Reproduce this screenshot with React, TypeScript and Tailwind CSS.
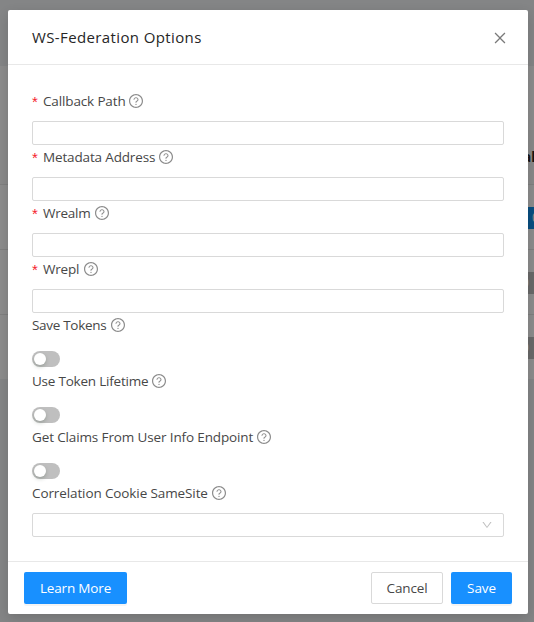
import React from "react";
import { AiOutlineClose, AiOutlineDown, AiOutlineQuestionCircle } from "react-icons/ai";

type Field = {
  label: string;
  kind: "input" | "switch" | "select";
  required?: boolean;
  width: string;
  spacing: string;
};

const fields: Field[] = [
  { label: "Callback Path", kind: "input", required: true, width: "w-[85px]", spacing: "tracking-[-0.14px]" },
  { label: "Metadata Address", kind: "input", required: true, width: "w-[115px]", spacing: "tracking-[-0.15px]" },
  { label: "Wrealm", kind: "input", required: true, width: "w-[51px]", spacing: "tracking-[-0.25px]" },
  { label: "Wrepl", kind: "input", required: true, width: "w-[40px]", spacing: "tracking-[-0.2px]" },
  { label: "Save Tokens", kind: "switch", width: "w-[78px]", spacing: "tracking-[-0.3px]" },
  { label: "Use Token Lifetime", kind: "switch", width: "w-[119px]", spacing: "tracking-[-0.22px]" },
  { label: "Get Claims From User Info Endpoint", kind: "switch", width: "w-[224px]", spacing: "tracking-[-0.13px]" },
  { label: "Correlation Cookie SameSite", kind: "select", width: "w-[179px]", spacing: "tracking-[-0.11px]" },
];

function Control({ kind, label }: { kind: Field["kind"]; label: string }) {
  if (kind === "switch") {
    return (
      <div className="flex h-6 items-center pt-1">
        <button role="switch" aria-checked={false} aria-label={label} className="flex h-4 w-7 items-center rounded-full bg-[#bfbfbf] px-[2px]">
          <span className="size-3 rounded-full bg-white shadow-[0_2px_4px_rgba(0,35,11,0.2)]" />
        </button>
      </div>
    );
  }
  if (kind === "select") {
    return (
      <div className="flex h-6 items-center justify-end rounded-[2px] border border-[#d9d9d9] bg-white pr-[10px]">
        <AiOutlineDown className="size-3 text-[#bfbfbf]" />
      </div>
    );
  }
  return <input aria-label={label} className="block h-6 w-full rounded-[2px] border border-[#d9d9d9] bg-white px-2 outline-none" />;
}

function Backdrop() {
  return (
    <div className="h-[622px] w-full bg-[#f0f2f5]">
      <div className="h-[66px]" />
      <div className="h-16 bg-white" />
      <div className="flex h-[55px] items-center border-b border-[#e8e8e8] bg-[#fafafa] pl-[523px] text-[13.5px] font-bold text-[#262626]">al</div>
      <div className="flex h-[65px] items-center border-b border-[#e8e8e8] bg-white pt-[2px] pl-[520px]">
        <div className="flex h-[22px] w-10 items-center bg-[#108ee9] pl-[12px] text-[12px] text-white">0</div>
      </div>
      <div className="flex h-[65px] items-center border-b border-[#e8e8e8] bg-white pt-[2px] pl-[494px]">
        <div className="flex h-[22px] w-10 items-center justify-end bg-[#bfbfbf] pr-[5px] text-[12px] text-white">0</div>
      </div>
      <div className="flex h-16 items-center bg-white pt-[2px] pl-[494px]">
        <div className="flex h-[22px] w-10 items-center justify-end bg-[#bfbfbf] pr-[5px] text-[12px] text-white">0</div>
      </div>
    </div>
  );
}

export default function App() {
  return (
    <div className="relative h-[622px] w-[534px] overflow-hidden font-['Open_Sans','Noto_Sans',sans-serif] text-[13.5px] text-[#474747]">
      <Backdrop />
      <div className="absolute inset-0 bg-black/45 px-2 pt-[10px]">
        <section role="dialog" className="flex h-[604px] w-[520px] flex-col rounded-[2px] bg-white shadow-[0_4px_12px_rgba(0,0,0,0.15)]">
          <header className="flex h-[55px] items-center justify-between border-b border-[#e8e8e8] pr-5 pl-6">
            <h1 className="whitespace-nowrap text-[15px] font-medium tracking-[0.38px] text-[#262626]">WS-Federation Options</h1>
            <button aria-label="Close" className="pt-[2px] text-[#7a7a7a]">
              <AiOutlineClose className="size-4" />
            </button>
          </header>
          <div className="flex-1 px-6 pt-6">
            {fields.map((f) => (
              <div key={f.label} className="h-14">
                <div className="mb-2 flex h-6 items-center">
                  {f.required && <span className="w-[11px] pt-[1px] font-['Liberation_Sans',sans-serif] text-[15px] leading-none text-[#f5222d]">*</span>}
                  <span className={`${f.width} ${f.spacing} whitespace-nowrap`}>{f.label}</span>
                  <AiOutlineQuestionCircle className="size-4 text-[#8c8c8c]" />
                </div>
                <Control kind={f.kind} label={f.label} />
              </div>
            ))}
          </div>
          <footer className="flex h-[53px] items-center justify-between border-t border-[#e8e8e8] px-4">
            <button className="h-8 w-[103px] rounded-[2px] bg-[#1890ff] tracking-[-0.17px] text-white shadow-[0_2px_0_rgba(0,0,0,0.045)]">Learn More</button>
            <div className="flex gap-2">
              <button className="h-8 w-[72px] rounded-[2px] border border-[#d9d9d9] bg-white tracking-[-0.15px]">Cancel</button>
              <button className="h-8 w-[61px] rounded-[2px] bg-[#1890ff] tracking-[-0.1px] text-white shadow-[0_2px_0_rgba(0,0,0,0.045)]">Save</button>
            </div>
          </footer>
        </section>
      </div>
    </div>
  );
}
